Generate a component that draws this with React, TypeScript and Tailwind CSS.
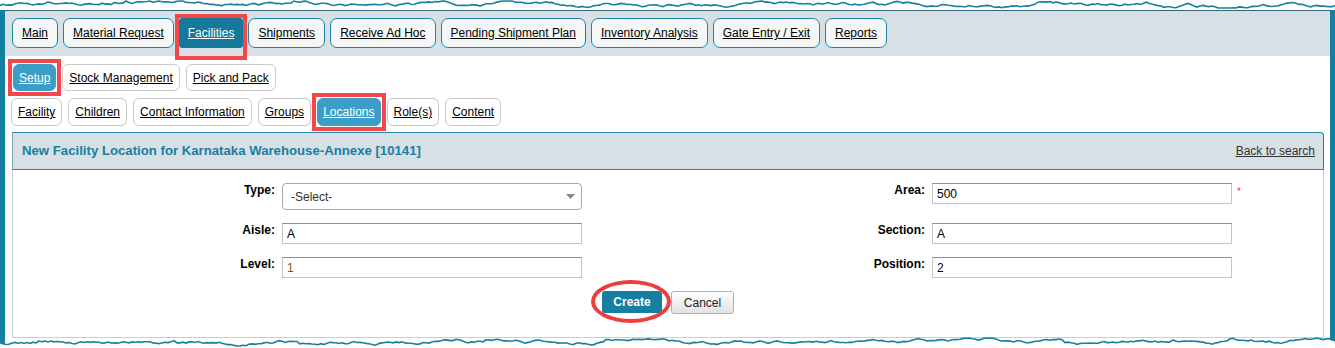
import React from "react";

const TEAL = "#15809f";

// torn paper edge, deterministic noise
function tornPoints(seed: number, w: number, base: number, amp: number) {
  let s = seed;
  const rnd = () => {
    s = (s * 9301 + 49297) % 233280;
    return s / 233280;
  };
  const pts: string[] = [];
  let y = base;
  for (let x = 0; x <= w; x += 3) {
    y += (rnd() - 0.5) * 2.6;
    if (rnd() > 0.93) y += (rnd() - 0.5) * 4;
    y += (base - y) * 0.12;
    y = Math.max(base - amp, Math.min(base + amp, y));
    pts.push(`${x},${y.toFixed(1)}`);
  }
  return pts;
}

const topPts = tornPoints(17, 1335, 4.5, 3.5);
const bottomPts = tornPoints(91, 1335, 6, 4);

function TopTab({ label, active }: { label: string; active?: boolean }) {
  if (active) {
    return (
      <div className="relative">
        <div className="h-[30px] px-[8px] flex items-center rounded-[3px] bg-[#15799b] text-white underline border border-[#15799b]">
          {label}
        </div>
        <span className="absolute -inset-x-[4px] -inset-y-[4px] border-[4px] border-[#f2474b] pointer-events-none" />
      </div>
    );
  }
  return (
    <div className="h-[30px] px-[9px] flex items-center rounded-[7px] border border-[#1b84a6] bg-[#f4f7f6] text-black underline">
      {label}
    </div>
  );
}

function SubTab({ label, active, h }: { label: string; active?: boolean; h: string }) {
  if (active) {
    return (
      <div className="relative">
        <div className={`${h} px-[5px] flex items-center rounded-[6px] bg-[#3c9ec6] text-white underline border border-[#3c9ec6]`}>
          {label}
        </div>
        <span className="absolute -inset-[5px] border-[4px] border-[#f2474b] pointer-events-none" />
      </div>
    );
  }
  return (
    <div className={`${h} px-[6px] flex items-center rounded-[6px] border border-[#c9c9c9] bg-white text-black underline`}>
      {label}
    </div>
  );
}

function Label({ text }: { text: string }) {
  return <div className="text-right pr-[7px] font-bold text-[12px] leading-[14px] text-black">{text}</div>;
}

function TextBox({ value, color }: { value: string; color?: string }) {
  return (
    <div
      className={`w-[300px] h-[21px] border border-[#c4c4c4] border-t-[#8f8f8f] bg-white pl-[4px] pt-[3px] text-[12px] leading-[14px] ${
        color ?? "text-black"
      }`}
    >
      {value}
    </div>
  );
}

export default function App() {
  return (
    <div
      className="relative w-[1335px] h-[348px] overflow-hidden bg-white text-[12px]"
      style={{ fontFamily: '"Liberation Sans", Arial, sans-serif' }}
    >
      <svg width="1335" height="10" className="block">
        <polyline points={topPts.join(" ")} fill="none" stroke={TEAL} strokeWidth="1.6" />
      </svg>

      <div className="h-[338px] border-l-[5px] border-r-[5px] border-[#13809f] flex flex-col">
        {/* main nav band */}
        <div className="h-[46px] bg-[#d6e0e5] border-t border-[#3c6276] pl-[7px] pt-[7px] flex gap-[5px]">
          <TopTab label="Main" />
          <TopTab label="Material Request" />
          <TopTab label="Facilities" active />
          <TopTab label="Shipments" />
          <TopTab label="Receive Ad Hoc" />
          <TopTab label="Pending Shipment Plan" />
          <TopTab label="Inventory Analysis" />
          <TopTab label="Gate Entry / Exit" />
          <TopTab label="Reports" />
        </div>

        <div className="mt-[8px] pl-[8px] flex gap-[6px]">
          <SubTab h="h-[27px]" label="Setup" active />
          <SubTab h="h-[27px]" label="Stock Management" />
          <SubTab h="h-[27px]" label="Pick and Pack" />
        </div>

        <div className="mt-[7px] pl-[6px] flex gap-[6px]">
          <SubTab h="h-[28px]" label="Facility" />
          <SubTab h="h-[28px]" label="Children" />
          <SubTab h="h-[28px]" label="Contact Information" />
          <SubTab h="h-[28px]" label="Groups" />
          <SubTab h="h-[28px]" label="Locations" active />
          <SubTab h="h-[28px]" label="Role(s)" />
          <SubTab h="h-[28px]" label="Content" />
        </div>

        {/* panel */}
        <div className="mt-[6px] ml-[7px] mr-[6px] flex flex-col flex-1">
          <div className="h-[38px] bg-[#d6e0e5] border border-[#2a82a2] border-l-[#7fa7b8] rounded-tr-[4px] flex items-center justify-between pl-[9px] pr-[8px]">
            <span className="font-bold text-[13.2px] text-[#1b7ea1]">
              New Facility Location for Karnataka Warehouse-Annexe [10141]
            </span>
            <span className="text-[12px] text-[#333] underline">Back to search</span>
          </div>

          <div className="h-[168px] border-x border-b border-[#cccccc] bg-white pt-[13px]">
            <div className="grid grid-cols-[269px_300px_350px_300px_1fr] grid-rows-[40px_34px_34px]">
              <Label text="Type:" />
              <div className="w-[300px] h-[27px] rounded-[4px] border border-[#a9a9a9] bg-white flex items-center justify-between pl-[8px] pr-[6px] text-[12px] text-[#333]">
                <span>-Select-</span>
                <svg width="9" height="5" viewBox="0 0 9 5">
                  <path d="M0 0 L9 0 L4.5 5 Z" fill="#888" />
                </svg>
              </div>
              <Label text="Area:" />
              <TextBox value="500" />
              <div className="pl-[5px] text-[#e8336a] text-[10px] leading-[10px] pt-[4px]">*</div>

              <Label text="Aisle:" />
              <TextBox value="A" />
              <Label text="Section:" />
              <TextBox value="A" />
              <div />

              <Label text="Level:" />
              <TextBox value="1" color="text-[#8a5800]" />
              <Label text="Position:" />
              <TextBox value="2" />
              <div />
            </div>

            <div className="flex justify-center gap-[9px]">
              <div className="relative">
                <div className="w-[60px] h-[22px] rounded-[3px] bg-[#157fa2] text-white font-bold text-[12px] flex items-center justify-center">
                  Create
                </div>
                <span className="absolute -left-[11px] -top-[11px] w-[80px] h-[43px] rounded-[50%] border-[4px] border-[#ee3d3f] pointer-events-none" />
              </div>
              <div className="w-[63px] h-[23px] rounded-[3px] border border-[#b0b0b0] bg-gradient-to-b from-white to-[#e2e2e2] text-[#222] text-[12px] flex items-center justify-center">
                Cancel
              </div>
            </div>
          </div>
        </div>
      </div>

      <svg width="1335" height="12" className="absolute left-0 bottom-0">
        <polygon points={[...bottomPts, "1335,12", "0,12"].join(" ")} fill="white" />
        <polyline points={bottomPts.join(" ")} fill="none" stroke={TEAL} strokeWidth="1.6" />
      </svg>
    </div>
  );
}
